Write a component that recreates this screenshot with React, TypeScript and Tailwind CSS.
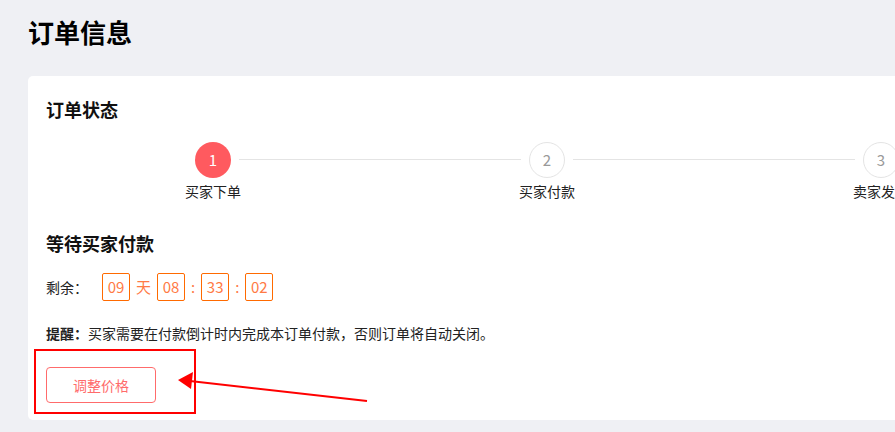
import React from "react";

const font = { fontFamily: '"Noto Sans CJK SC", "Noto Sans", sans-serif' };

const steps = [
  { n: "1", label: "买家下单", active: true },
  { n: "2", label: "买家付款", active: false },
  { n: "3", label: "卖家发货", active: false },
  { n: "4", label: "交易完成", active: false },
];

function TimeBox({ v }: { v: string }) {
  return (
    <span className="flex h-[28px] w-[28px] items-center justify-center rounded-[2px] border border-[#ff6a00] text-[15px] text-[#ff7a45]">
      {v}
    </span>
  );
}

export default function App() {
  return (
    <div className="relative h-[432px] w-[895px] overflow-hidden bg-[#eff0f4] [text-spacing-trim:space-all]" style={font}>
      <div className="pl-[28px] pt-[14px]">
        <h1 className="text-[26px] font-bold leading-[36px] text-black">订单信息</h1>
        <div className="mt-[26px] h-[344px] w-[1400px] rounded-[5px] bg-white pl-[18px] pt-[20px]">
          <h2 className="text-[18px] font-bold leading-[26px] text-[#111]">订单状态</h2>
          <div className="mt-[20px] flex">
            {steps.map((s, i) => (
              <div key={s.n} className="relative flex w-[334px] shrink-0 flex-col items-center">
                {i < steps.length - 1 && (
                  <span className="absolute left-[calc(50%+26px)] top-[17px] h-px w-[282px] bg-[#e4e4e4]" />
                )}
                <span
                  className={
                    s.active
                      ? "flex h-[36px] w-[36px] items-center justify-center rounded-full bg-[#ff5a5f] text-[15px] text-white"
                      : "flex h-[36px] w-[36px] items-center justify-center rounded-full border border-[#e4e4e4] bg-white text-[15px] text-[#999]"
                  }
                >
                  {s.n}
                </span>
                <span className="mt-[3px] text-[14px] leading-[20px] text-[#222]">{s.label}</span>
              </div>
            ))}
          </div>
          <h3 className="mt-[29px] text-[18px] font-bold leading-[26px] text-[#111]">等待买家付款</h3>
          <div className="mt-[17px] flex items-center">
            <span className="mr-[14px] w-[42px] text-[14px] text-[#222]">剩余：</span>
            <TimeBox v="09" />
            <span className="mx-[6px] text-[15px] text-[#ff7a45]">天</span>
            <TimeBox v="08" />
            <span className="mx-[6px] text-[15px] text-[#ff7a45]">:</span>
            <TimeBox v="33" />
            <span className="mx-[6px] text-[15px] text-[#ff7a45]">:</span>
            <TimeBox v="02" />
          </div>
          <p className="mt-[22px] text-[14px] leading-[20px] text-[#222]">
            <span className="font-bold">提醒：</span>买家需要在付款倒计时内完成本订单付款，否则订单将自动关闭。
          </p>
          <button className="mt-[24px] h-[36px] w-[110px] rounded-[4px] border border-[#ff6b6b] bg-white text-[14px] text-[#ff6b6b]">
            调整价格
          </button>
        </div>
      </div>
      <svg className="pointer-events-none absolute left-0 top-0" width="895" height="432">
        <rect x="35" y="350" width="160" height="63" fill="none" stroke="#ff0000" strokeWidth="2" />
        <line x1="367" y1="401" x2="190" y2="381" stroke="#ff0000" strokeWidth="2" />
        <polygon points="178,380 193,372 191,389" fill="#ff0000" />
      </svg>
    </div>
  );
}
